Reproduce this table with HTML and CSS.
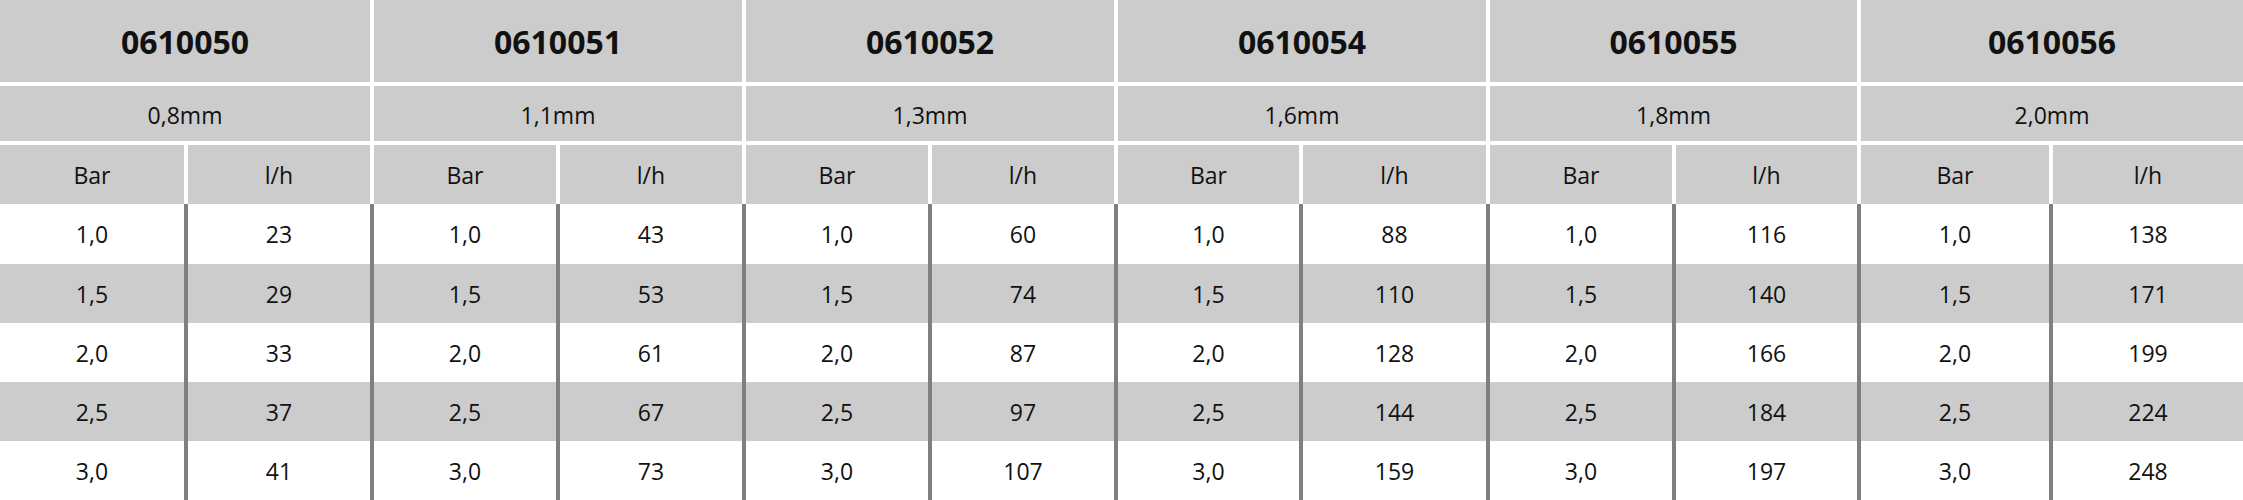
FILE: index.html
```html
<!DOCTYPE html>
<html lang="de">
<head>
<meta charset="utf-8">
<title>Düsen Durchfluss</title>
<link rel="stylesheet" href="styles.css">
</head>
<body>
<div class="flow-table">
  <div class="cell code first">0610050</div>
  <div class="cell code">0610051</div>
  <div class="cell code">0610052</div>
  <div class="cell code">0610054</div>
  <div class="cell code">0610055</div>
  <div class="cell code">0610056</div>

  <div class="cell dia first">0,8mm</div>
  <div class="cell dia">1,1mm</div>
  <div class="cell dia">1,3mm</div>
  <div class="cell dia">1,6mm</div>
  <div class="cell dia">1,8mm</div>
  <div class="cell dia">2,0mm</div>

  <div class="cell unit first">Bar</div><div class="cell unit">l/h</div>
  <div class="cell unit">Bar</div><div class="cell unit">l/h</div>
  <div class="cell unit">Bar</div><div class="cell unit">l/h</div>
  <div class="cell unit">Bar</div><div class="cell unit">l/h</div>
  <div class="cell unit">Bar</div><div class="cell unit">l/h</div>
  <div class="cell unit">Bar</div><div class="cell unit">l/h</div>

  <div class="cell val first">1,0</div><div class="cell val">23</div>
  <div class="cell val">1,0</div><div class="cell val">43</div>
  <div class="cell val">1,0</div><div class="cell val">60</div>
  <div class="cell val">1,0</div><div class="cell val">88</div>
  <div class="cell val">1,0</div><div class="cell val">116</div>
  <div class="cell val">1,0</div><div class="cell val">138</div>

  <div class="cell val alt first">1,5</div><div class="cell val alt">29</div>
  <div class="cell val alt">1,5</div><div class="cell val alt">53</div>
  <div class="cell val alt">1,5</div><div class="cell val alt">74</div>
  <div class="cell val alt">1,5</div><div class="cell val alt">110</div>
  <div class="cell val alt">1,5</div><div class="cell val alt">140</div>
  <div class="cell val alt">1,5</div><div class="cell val alt">171</div>

  <div class="cell val first">2,0</div><div class="cell val">33</div>
  <div class="cell val">2,0</div><div class="cell val">61</div>
  <div class="cell val">2,0</div><div class="cell val">87</div>
  <div class="cell val">2,0</div><div class="cell val">128</div>
  <div class="cell val">2,0</div><div class="cell val">166</div>
  <div class="cell val">2,0</div><div class="cell val">199</div>

  <div class="cell val alt first">2,5</div><div class="cell val alt">37</div>
  <div class="cell val alt">2,5</div><div class="cell val alt">67</div>
  <div class="cell val alt">2,5</div><div class="cell val alt">97</div>
  <div class="cell val alt">2,5</div><div class="cell val alt">144</div>
  <div class="cell val alt">2,5</div><div class="cell val alt">184</div>
  <div class="cell val alt">2,5</div><div class="cell val alt">224</div>

  <div class="cell val first">3,0</div><div class="cell val">41</div>
  <div class="cell val">3,0</div><div class="cell val">73</div>
  <div class="cell val">3,0</div><div class="cell val">107</div>
  <div class="cell val">3,0</div><div class="cell val">159</div>
  <div class="cell val">3,0</div><div class="cell val">197</div>
  <div class="cell val">3,0</div><div class="cell val">248</div>
</div>
</body>
</html>
```

FILE: styles.css
```css
html, body {
  margin: 0;
  padding: 0;
  background: #ffffff;
}

body {
  font-family: "Open Sans", "Liberation Sans", sans-serif;
  color: #111111;
}

.flow-table {
  display: grid;
  grid-template-columns: 184px 186px 186px 186px 186px 186px 185px 187px 186px 185px 192px 194px;
  grid-template-rows: 82px 59px 63px 60px 59px 59px 59px 59px;
  width: 2243px;
}

.cell {
  display: flex;
  align-items: center;
  justify-content: center;
  box-sizing: border-box;
  border-left: 4px solid #ffffff;
  background: #cccccc;
  font-size: 23px;
  line-height: 1;
}

.cell.first {
  border-left: none;
}

.code {
  grid-column: span 2;
  font-size: 32px;
  font-weight: 700;
  padding-top: 2px;
}

.dia {
  grid-column: span 2;
  border-top: 4px solid #ffffff;
  padding-top: 4px;
}

.unit {
  border-top: 4px solid #ffffff;
  padding-top: 2px;
}

.val {
  background: #ffffff;
  border-left-color: #7f7f7f;
  padding-top: 1px;
}

.val.alt {
  background: #cccccc;
}
```
